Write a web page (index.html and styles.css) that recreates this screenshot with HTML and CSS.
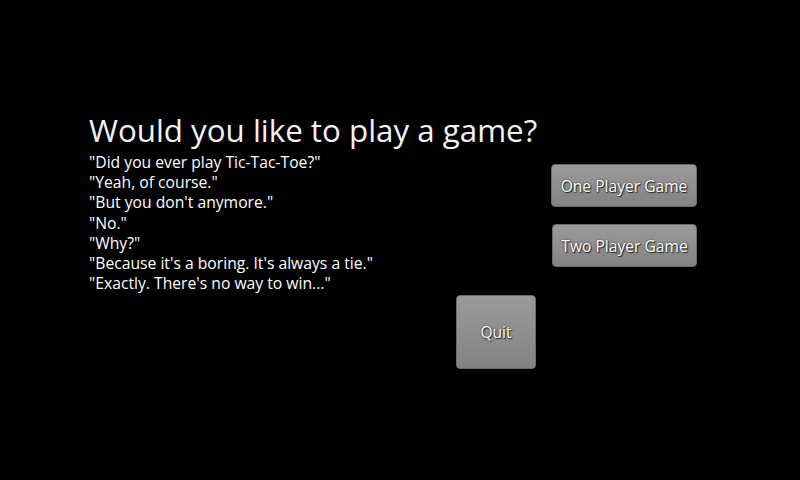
FILE: index.html
```html
<!DOCTYPE html>
<html>
<head>
<meta charset="utf-8">
<link rel="stylesheet" href="styles.css">
</head>
<body>
<div class="screen">
  <h1 class="title">Would you like to play a game?</h1>
  <div class="row">
    <div class="story">
      <p>"Did you ever play Tic-Tac-Toe?"</p>
      <p>"Yeah, of course."</p>
      <p>"But you don't anymore."</p>
      <p>"No."</p>
      <p>"Why?"</p>
      <p>"Because it's a boring. It's always a tie."</p>
      <p>"Exactly. There's no way to win..."</p>
    </div>
    <div class="choices">
      <button class="btn btn-wide">One Player Game</button>
      <button class="btn btn-wide btn-two">Two Player Game</button>
    </div>
  </div>
  <div class="quit-row">
    <button class="btn btn-quit">Quit</button>
  </div>
</div>
</body>
</html>
```
FILE: styles.css
```css
html, body {
  margin: 0;
  padding: 0;
  background: #000;
}
.screen {
  width: 800px;
  height: 480px;
  box-sizing: border-box;
  padding: 109px 0 0 89px;
  font-family: "Open Sans", "Noto Sans", sans-serif;
  color: #fff;
  overflow: hidden;
}
.title {
  margin: 0;
  font-weight: normal;
  font-size: 31.3px;
  line-height: 43px;
  color: #f2f2f2;
}
.row {
  display: flex;
  align-items: flex-start;
}
.story {
  width: 460px;
  font-size: 15.7px;
  line-height: 20.2px;
  color: #fff;
}
.story p {
  margin: 0;
  white-space: nowrap;
}
.choices {
  display: flex;
  flex-direction: column;
  margin-left: 2px;
  padding-top: 12px;
}
.btn {
  font-family: "Open Sans", "Noto Sans", sans-serif;
  font-size: 15.6px;
  color: #fff;
  text-shadow: 1px 1px 1px #222, 0 0 2px #333;
  background: linear-gradient(#9a9a9a, #838383);
  border: 1px solid #6a6a6a;
  border-radius: 4px;
  padding: 0;
}
.btn-wide {
  width: 146px;
  height: 43px;
}
.btn-two {
  margin-top: 17px;
  width: 145px;
  margin-left: 1px;
}
.quit-row {
  display: flex;
  padding-left: 367px;
  margin-top: 2px;
}
.btn-quit {
  width: 80px;
  height: 74px;
}
```
